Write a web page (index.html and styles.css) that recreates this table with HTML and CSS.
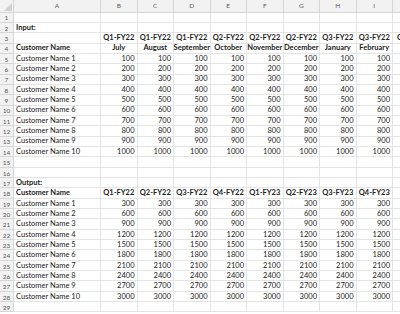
FILE: index.html
```html
<!DOCTYPE html>
<html lang="en">
<head>
  <meta charset="UTF-8">
  <title>Quarterly totals</title>
  <link rel="stylesheet" href="styles.css">
</head>
<body>
  <div class="sheet" id="sheet"></div>

  <script>
    // Build the worksheet grid from plain data
    const columns = ['A', 'B', 'C', 'D', 'E', 'F', 'G', 'H', 'I', 'J'];
    const rows = {};

    rows[2] = [{ text: 'Input:', bold: true }];
    rows[3] = [null].concat(['Q1-FY22', 'Q1-FY22', 'Q1-FY22', 'Q2-FY22', 'Q2-FY22', 'Q2-FY22', 'Q3-FY22', 'Q3-FY22', 'Q3-FY22']
      .map(t => ({ text: t, bold: true, center: true })));
    rows[4] = [{ text: 'Customer Name', bold: true }].concat(
      ['July', 'August', 'September', 'October', 'November', 'December', 'January', 'February', 'March']
        .map(t => ({ text: t, bold: true, center: true })));
    for (let i = 1; i <= 10; i++) {
      const cells = [{ text: 'Customer Name ' + i }];
      for (let c = 0; c < 8; c++) cells.push({ text: String(i * 100), num: true });
      rows[4 + i] = cells;
    }

    rows[17] = [{ text: 'Output:', bold: true }];
    rows[18] = [{ text: 'Customer Name', bold: true }].concat(
      ['Q1-FY22', 'Q2-FY22', 'Q3-FY22', 'Q4-FY22', 'Q1-FY23', 'Q2-FY23', 'Q3-FY23', 'Q4-FY23']
        .map(t => ({ text: t, bold: true, center: true })));
    for (let i = 1; i <= 10; i++) {
      const cells = [{ text: 'Customer Name ' + i }];
      for (let c = 0; c < 8; c++) cells.push({ text: String(i * 300), num: true });
      rows[18 + i] = cells;
    }

    const sheet = document.getElementById('sheet');

    function addCell(className, text) {
      const div = document.createElement('div');
      div.className = className;
      if (text) {
        const span = document.createElement('span');
        span.textContent = text;
        div.appendChild(span);
      }
      sheet.appendChild(div);
    }

    // Column headers (J is only partly on screen)
    addCell('corner');
    columns.forEach(col => addCell('col-head', col === 'J' ? '' : col));

    // Body rows
    for (let r = 1; r <= 29; r++) {
      addCell('row-head', String(r));
      const cells = rows[r] || [];
      columns.forEach((col, idx) => {
        const cell = cells[idx];
        let cls = 'cell';
        if (cell && cell.bold) cls += ' bold';
        if (cell && cell.center) cls += ' center';
        if (cell && cell.num) cls += ' num';
        addCell(cls, cell ? cell.text : '');
      });
    }
  </script>
</body>
</html>
```

FILE: styles.css
```css
body {
  margin: 0;
  background-color: #ffffff;
  overflow: hidden;
  font-family: 'Lato', 'Liberation Sans', sans-serif;
  color: #222222;
}
.sheet {
  display: grid;
  grid-template-columns: 14px 87px repeat(8, 36.5px) 40px;
  grid-template-rows: 12.5px repeat(29, 10.35px);
  width: max-content;
}
.corner,
.col-head,
.row-head {
  background-color: #f2f2f2;
  color: #5a5a5a;
  font-size: 6.5px;
  box-sizing: border-box;
  border-right: 1px solid #d6d6d6;
  border-bottom: 1px solid #d6d6d6;
  display: flex;
  align-items: center;
  justify-content: center;
}
.corner {
  position: relative;
}
.corner::after {
  content: '';
  position: absolute;
  right: 1px;
  bottom: 1px;
  border-left: 8px solid transparent;
  border-bottom: 8px solid #d0d0d0;
}
.row-head {
  align-items: flex-end;
  padding-bottom: 0.5px;
}
.cell {
  box-sizing: border-box;
  border-right: 1px solid #e4e4e4;
  border-bottom: 1px solid #e4e4e4;
  font-size: 7.5px;
  line-height: 9px;
  padding: 0 2px 0.5px 2px;
  white-space: nowrap;
  display: flex;
  align-items: flex-end;
  overflow: visible;
  min-width: 0;
}
.bold {
  font-weight: 700;
}
.center {
  justify-content: center;
}
.num {
  justify-content: flex-end;
}
```
